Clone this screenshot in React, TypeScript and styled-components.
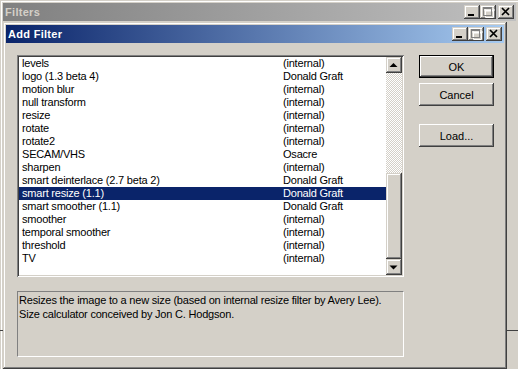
import styled, { createGlobalStyle, css } from 'styled-components';

const GlobalStyle = createGlobalStyle`
  html, body {
    margin: 0;
    padding: 0;
    background: #d4d0c8;
  }
  body {
    font-family: 'Liberation Sans', Arial, sans-serif;
    font-size: 11px;
    color: #000;
  }
`;

const filters = [
  { name: 'levels', author: '(internal)' },
  { name: 'logo (1.3 beta 4)', author: 'Donald Graft' },
  { name: 'motion blur', author: '(internal)' },
  { name: 'null transform', author: '(internal)' },
  { name: 'resize', author: '(internal)' },
  { name: 'rotate', author: '(internal)' },
  { name: 'rotate2', author: '(internal)' },
  { name: 'SECAM/VHS', author: 'Osacre' },
  { name: 'sharpen', author: '(internal)' },
  { name: 'smart deinterlace (2.7 beta 2)', author: 'Donald Graft' },
  { name: 'smart resize (1.1)', author: 'Donald Graft' },
  { name: 'smart smoother (1.1)', author: 'Donald Graft' },
  { name: 'smoother', author: '(internal)' },
  { name: 'temporal smoother', author: '(internal)' },
  { name: 'threshold', author: '(internal)' },
  { name: 'TV', author: '(internal)' },
];

const SELECTED = 'smart resize (1.1)';

const raised = css`
  background: #d4d0c8;
  box-shadow: inset -1px -1px #404040, inset 1px 1px #d4d0c8,
    inset -2px -2px #808080, inset 2px 2px #ffffff;
`;

type Kind = 'min' | 'max' | 'close';

const CaptionGlyph = ({ kind }: { kind: Kind }) => {
  if (kind === 'min') {
    return (
      <svg width="16" height="14" viewBox="0 0 16 14">
        <rect x="4" y="9" width="6" height="2" fill="#000" />
      </svg>
    );
  }
  if (kind === 'max') {
    // disabled maximize: grey box with white emboss
    return (
      <svg width="16" height="14" viewBox="0 0 16 14">
        <path d="M4.5 4.5h8v7h-8z M4 3h9v2H4z" fill="none" stroke="#fff" strokeWidth="1" transform="translate(1 1)" />
        <rect x="3.5" y="2.5" width="8" height="8" fill="none" stroke="#808080" />
        <rect x="3" y="2" width="9" height="2" fill="#808080" />
      </svg>
    );
  }
  return (
    <svg width="16" height="14" viewBox="0 0 16 14">
      <path d="M4 3L11 10M11 3L4 10" stroke="#000" strokeWidth="1.7" />
    </svg>
  );
};

const TitleBar = ({ title, active }: { title: string; active?: boolean }) => (
  <Caption $active={active}>
    <CaptionText $active={active}>{title}</CaptionText>
    <CaptionButtons>
      <CaptionButton>
        <CaptionGlyph kind="min" />
      </CaptionButton>
      <CaptionButton>
        <CaptionGlyph kind="max" />
      </CaptionButton>
      <CaptionButton $gap>
        <CaptionGlyph kind="close" />
      </CaptionButton>
    </CaptionButtons>
  </Caption>
);

const Arrow = ({ up }: { up?: boolean }) => (
  <svg width="16" height="16" viewBox="0 0 16 16">
    <polygon points={up ? '7.5,6 3.5,10 11.5,10' : '7.5,10.5 3.5,6.5 11.5,6.5'} fill="#000" />
  </svg>
);

export default function App() {
  return (
    <Desktop>
      <GlobalStyle />
      <OuterWindow>
        <TitleBar title="Filters" />
        <OuterClient>
          <BackPanel />
        </OuterClient>
      </OuterWindow>

      <Dialog>
        <TitleBar title="Add Filter" active />
        <DialogBody>
          <LeftColumn>
            <ListBox>
              <Rows>
                {filters.map((f) => (
                  <Row key={f.name} $selected={f.name === SELECTED}>
                    <span>{f.name}</span>
                    <span>{f.author}</span>
                  </Row>
                ))}
              </Rows>
              <ScrollBar>
                <ArrowButton>
                  <Arrow up />
                </ArrowButton>
                <Track>
                  <Thumb />
                </Track>
                <ArrowButton>
                  <Arrow />
                </ArrowButton>
              </ScrollBar>
            </ListBox>
            <Description>
              Resizes the image to a new size (based on internal resize filter by Avery Lee).
              <br />
              Size calculator conceived by Jon C. Hodgson.
            </Description>
          </LeftColumn>
          <ButtonColumn>
            <PushButton $default>OK</PushButton>
            <PushButton>Cancel</PushButton>
            <PushButton $spaced>Load...</PushButton>
          </ButtonColumn>
        </DialogBody>
      </Dialog>
    </Desktop>
  );
}

const Desktop = styled.div`
  position: relative;
  width: 518px;
  height: 369px;
  overflow: hidden;
  background: #d4d0c8;
`;

const OuterWindow = styled.div`
  width: 519px;
  height: 380px;
  box-sizing: border-box;
  padding: 3px;
  background: #d4d0c8;
  box-shadow: inset 1px 1px #d4d0c8, inset 2px 2px #ffffff;
`;

const OuterClient = styled.div`
  margin-left: -3px;
  margin-right: -3px;
`;

const BackPanel = styled.div`
  height: 310px;
  box-sizing: border-box;
  border-bottom: 1px solid #404040;
`;

const Dialog = styled.div`
  position: absolute;
  left: 3px;
  top: 22px;
  width: 504px;
  height: 347px;
  box-sizing: border-box;
  padding: 3px;
  background: #d4d0c8;
  box-shadow: inset -1px -1px #404040, inset 1px 1px #d4d0c8,
    inset -2px -2px #808080, inset 2px 2px #ffffff;
`;

const Caption = styled.div<{ $active?: boolean }>`
  height: 18px;
  display: flex;
  align-items: center;
  justify-content: space-between;
  padding: 0 2px 0 2px;
  background: ${(p) =>
    p.$active
      ? 'linear-gradient(to right, #0a246a, #a6caf0)'
      : 'linear-gradient(to right, #808080, #c0c0c0)'};
`;

const CaptionText = styled.div<{ $active?: boolean }>`
  font-family: 'Liberation Sans', Arial, sans-serif;
  font-weight: bold;
  font-size: 11px;
  letter-spacing: 0.3px;
  color: ${(p) => (p.$active ? '#ffffff' : '#d4d0c8')};
`;

const CaptionButtons = styled.div`
  display: flex;
`;

const CaptionButton = styled.div<{ $gap?: boolean }>`
  ${raised};
  width: 16px;
  height: 14px;
  margin-left: ${(p) => (p.$gap ? '2px' : '0')};
  display: flex;
`;

const DialogBody = styled.div`
  display: flex;
  gap: 15px;
  padding: 12px 0 0 11px;
`;

const LeftColumn = styled.div`
  width: 387px;
  display: flex;
  flex-direction: column;
  gap: 14px;
`;

const ListBox = styled.div`
  height: 222px;
  box-sizing: border-box;
  padding: 2px;
  display: flex;
  background: #ffffff;
  box-shadow: inset 1px 1px #808080, inset -1px -1px #ffffff,
    inset 2px 2px #404040, inset -2px -2px #d4d0c8;
`;

const Rows = styled.div`
  flex: 1;
  overflow: hidden;
`;

const Row = styled.div<{ $selected?: boolean }>`
  display: grid;
  grid-template-columns: 261px 1fr;
  height: 13px;
  line-height: 13px;
  padding-left: 3px;
  letter-spacing: -0.2px;
  white-space: nowrap;
  background: ${(p) => (p.$selected ? '#0a246a' : 'transparent')};
  color: ${(p) => (p.$selected ? '#ffffff' : '#000000')};
`;

const ScrollBar = styled.div`
  width: 16px;
  display: flex;
  flex-direction: column;
`;

const ArrowButton = styled.div`
  ${raised};
  width: 16px;
  height: 16px;
  display: flex;
`;

const Track = styled.div`
  flex: 1;
  display: flex;
  flex-direction: column;
  justify-content: flex-end;
  background-image: conic-gradient(#ffffff 25%, #d4d0c8 0 50%, #ffffff 0 75%, #d4d0c8 0);
  background-size: 2px 2px;
`;

const Thumb = styled.div`
  ${raised};
  height: 86px;
`;

const Description = styled.div`
  height: 66px;
  box-sizing: border-box;
  padding: 1px 0 0 1px;
  line-height: 14px;
  letter-spacing: -0.2px;
  border-top: 1px solid #808080;
  border-left: 1px solid #808080;
  border-bottom: 1px solid #ffffff;
  border-right: 1px solid #ffffff;
`;

const ButtonColumn = styled.div`
  width: 75px;
  display: flex;
  flex-direction: column;
  gap: 5px;
`;

const PushButton = styled.div<{ $default?: boolean; $spaced?: boolean }>`
  height: 23px;
  display: flex;
  align-items: center;
  justify-content: center;
  margin-top: ${(p) => (p.$spaced ? '13px' : '0')};
  background: #d4d0c8;
  box-shadow: ${(p) =>
    p.$default
      ? 'inset -1px -1px #000, inset 1px 1px #000, inset -2px -2px #404040, inset 2px 2px #fff, inset -3px -3px #808080'
      : 'inset -1px -1px #404040, inset 1px 1px #fff, inset -2px -2px #808080, inset 2px 2px #d4d0c8'};
`;
